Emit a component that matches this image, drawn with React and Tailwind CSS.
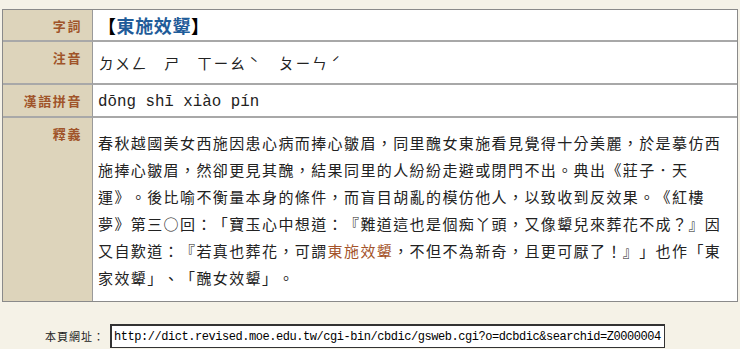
const cjk = "font-['Noto_Sans_CJK_TC','Noto_Sans',sans-serif]";

const Label = ({ children, last }) => (
  <div
    className={`bg-[#ddd4bb] border-r border-[#9a9a9a] ${
      last ? '' : 'border-b-2 border-b-[#a8a8a8]'
    } pr-[10px] pt-[6px] text-right text-[13px] font-bold tracking-[1.6px] text-[#a0542a] ${cjk}`}
  >
    {children}
  </div>
);

const Cell = ({ children, last, className = '' }) => (
  <div
    className={`bg-white ${last ? '' : 'border-b-2 border-b-[#a8a8a8]'} pl-[5px] ${className}`}
  >
    {children}
  </div>
);

const zhuyin = ['ㄉ', 'ㄨ', 'ㄥ', '　', 'ㄕ', '　', 'ㄒ', 'ㄧ', 'ㄠ', 'ˋ', '　', 'ㄆ', 'ㄧ', 'ㄣ', 'ˊ'];

const lines = [
  '春秋越國美女西施因患心病而捧心皺眉，同里醜女東施看見覺得十分美麗，於是摹仿西',
  '施捧心皺眉，然卻更見其醜，結果同里的人紛紛走避或閉門不出。典出《莊子．天',
  '運》。後比喻不衡量本身的條件，而盲目胡亂的模仿他人，以致收到反效果。《紅樓',
  '夢》第三○回：「寶玉心中想道：『難道這也是個痴丫頭，又像顰兒來葬花不成？』因',
];

export default function App() {
  return (
    <div className="h-screen w-full bg-[#f5f2e7] pt-[9px] pl-[2px] overflow-hidden [text-spacing-trim:space-all]">
      {/* 辭典條目 */}
      <div className="w-[736px] border border-[#8a8a8a] grid grid-cols-[90px_1fr]">
        <Label>字詞</Label>
        <Cell className="h-[32px] flex items-center">
          <span className={`text-[18px] font-bold tracking-[0.6px] ${cjk}`}>
            <span className="text-black">【</span>
            <span className="text-[#1f5c99]">東施效顰</span>
            <span className="text-black">】</span>
          </span>
        </Cell>

        <Label>注音</Label>
        <Cell className="h-[43px] flex items-center pt-[2px]">
          <div className={`flex text-[15px] text-[#222] ${cjk}`}>
            {zhuyin.map((c, i) => (
              <span key={i} className="w-[16.4px] text-center">
                {c}
              </span>
            ))}
          </div>
        </Cell>

        <Label>漢語拼音</Label>
        <Cell className="h-[33px] flex items-center pt-[4px]">
          <span className="font-['Liberation_Mono',monospace] text-[15.8px] text-[#222]">
            dōng shī xiào pín
          </span>
        </Cell>

        <Label last>釋義</Label>
        <Cell last className="h-[183px] pt-[11px]">
          <div className={`text-[15px] leading-[27px] tracking-[1.4px] text-[#222] ${cjk}`}>
            {lines.map((l, i) => (
              <div key={i} className="whitespace-nowrap">
                {l}
              </div>
            ))}
            <div className="whitespace-nowrap">
              又自歎道：『若真也葬花，可謂<span className="text-[#a4532a]">東施效顰</span>
              ，不但不為新奇，且更可厭了！』」也作「東
            </div>
            <div className="whitespace-nowrap">家效顰」、「醜女效顰」。</div>
          </div>
        </Cell>
      </div>

      {/* 本頁網址 */}
      <div className="mt-[22px] pl-[43px] flex items-center gap-[5px]">
        <span className={`text-[11px] tracking-[1px] text-[#222] ${cjk}`}>本頁網址：</span>
        <div className="w-[555px] h-[24px] bg-white border border-[#333] border-t-2 border-l-2 flex items-center pl-[2px]">
          <span className="font-['Liberation_Mono',monospace] text-[12px] tracking-[-0.45px] text-black whitespace-nowrap">
            http://dict.revised.moe.edu.tw/cgi-bin/cbdic/gsweb.cgi?o=dcbdic&amp;searchid=Z0000004
          </span>
        </div>
      </div>
    </div>
  );
}
